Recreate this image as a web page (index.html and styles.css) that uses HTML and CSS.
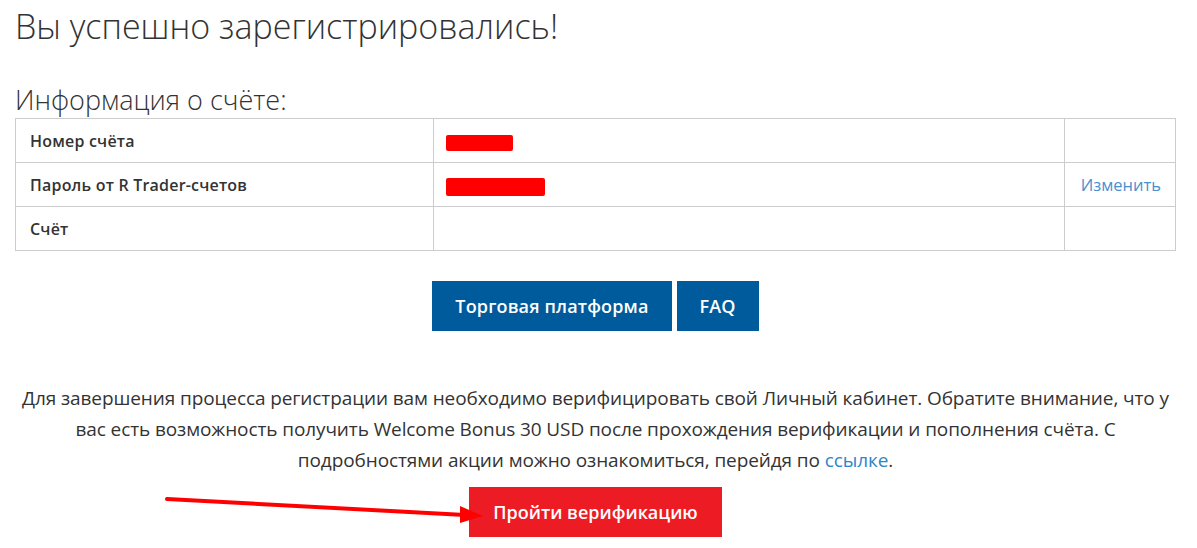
FILE: index.html
```html
<!DOCTYPE html>
<html lang="ru">

<head>
    <meta charset="UTF-8">
    <title>Вы успешно зарегистрировались!</title>
    <meta name="viewport" content="width=device-width, initial-scale=1.0">
    <link rel="stylesheet" href="styles.css">
</head>

<body>
    <main class="page">
        <h1 class="titre">Вы успешно зарегистрировались!</h1>

        <h2 class="sous-titre">Информация о счёте:</h2>

        <table class="compte">
            <tr>
                <th>Номер счёта</th>
                <td class="valeur"><span class="masque masque-court"></span></td>
                <td class="action"></td>
            </tr>
            <tr>
                <th>Пароль от R Trader-счетов</th>
                <td class="valeur"><span class="masque masque-long"></span></td>
                <td class="action"><a href="#">Изменить</a></td>
            </tr>
            <tr>
                <th>Счёт</th>
                <td class="valeur"></td>
                <td class="action"></td>
            </tr>
        </table>

        <div class="boutons">
            <a href="#" class="bouton bouton-bleu">Торговая платформа</a>
            <a href="#" class="bouton bouton-bleu">FAQ</a>
        </div>

        <p class="texte">Для завершения процесса регистрации вам необходимо верифицировать свой Личный кабинет. Обратите внимание, что у вас есть возможность получить Welcome Bonus 30 USD после прохождения верификации и пополнения счёта. С подробностями акции можно ознакомиться, перейдя по <a href="#">ссылке</a>.</p>

        <div class="boutons boutons-final">
            <a href="#" class="bouton bouton-rouge">Пройти верификацию</a>
        </div>

        <!-- Flèche d'annotation par-dessus la page -->
        <svg class="fleche" width="330" height="34" viewBox="0 0 330 34">
            <line x1="2" y1="2" x2="300" y2="18" stroke="#ff0000" stroke-width="4" stroke-linecap="round" />
            <polygon points="295,9 318,19 295,26" fill="#ff0000" />
        </svg>
    </main>
</body>

</html>
```

FILE: styles.css
```css
/* Reset */

* {
    padding: 0;
    margin: 0;
    box-sizing: border-box;
}

body {
    font-family: "Open Sans", "Noto Sans", sans-serif;
    color: #333333;
    background-color: #ffffff;
}

.page {
    position: relative;
    padding: 0 21px 0 15px;
}

/* Titres */

.titre {
    font-size: 34px;
    font-weight: 300;
    line-height: 52px;
    color: #333333;
}

.sous-titre {
    margin-top: 30px;
    font-size: 27px;
    font-weight: 300;
    line-height: 36px;
}

/* Tableau */

.compte {
    width: 100%;
    border-collapse: collapse;
    font-size: 16px;
}

.compte th,
.compte td {
    height: 44px;
    border: 1px solid #cccccc;
    padding: 0 14px;
    text-align: left;
    vertical-align: middle;
}

.compte th {
    width: 418px;
    font-weight: 600;
    letter-spacing: 0.2px;
}

.compte .valeur {
    padding-left: 12px;
}

.compte .action {
    width: 111px;
    text-align: right;
}

.compte a {
    color: #4a90d0;
    text-decoration: none;
    font-size: 16.5px;
}

.masque {
    display: inline-block;
    background-color: #ff0000;
    border-radius: 2px;
    vertical-align: middle;
}

.masque-court {
    width: 67px;
    height: 16px;
    margin-top: 2px;
}

.masque-long {
    width: 99px;
    height: 18px;
    margin-top: 4px;
}

/* Boutons */

.boutons {
    display: flex;
    justify-content: center;
    gap: 5px;
    margin-top: 30px;
}

.boutons-final {
    margin-top: 11px;
}

.bouton {
    display: inline-block;
    height: 50px;
    line-height: 50px;
    padding: 0 23px;
    font-size: 18px;
    font-weight: 600;
    letter-spacing: 0.15px;
    color: #ffffff;
    text-decoration: none;
}

.bouton-bleu {
    background-color: #005b9c;
}

.bouton-rouge {
    background-color: #ed1c24;
    padding: 0 24px;
    letter-spacing: 0;
}

/* Texte */

.texte {
    margin-top: 52px;
    font-size: 19px;
    line-height: 31px;
    letter-spacing: -0.1px;
    text-align: center;
}

.texte a {
    color: #2f86c8;
    text-decoration: none;
}

/* Flèche */

.fleche {
    position: absolute;
    left: 165px;
    top: 497px;
}
```
